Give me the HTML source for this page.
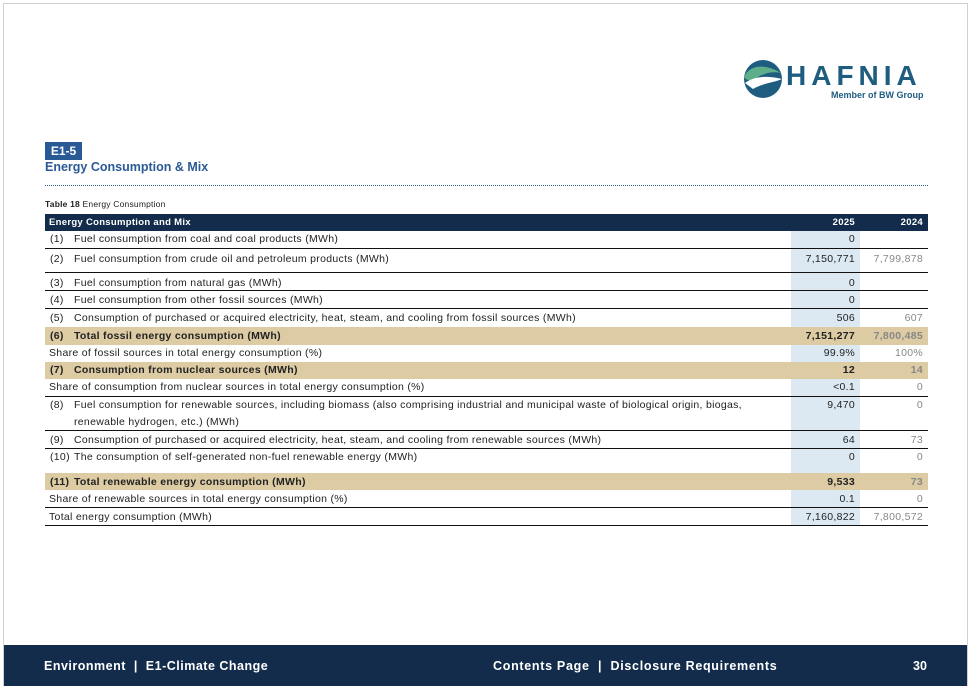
<!DOCTYPE html>
<html><head><meta charset="utf-8"><style>
*{margin:0;padding:0;box-sizing:border-box}
body{width:971px;height:688px;background:#fff;position:relative;overflow:hidden;font-family:"Liberation Sans",sans-serif;color:#222}
.frame{position:absolute;left:3px;top:3px;width:965px;height:683px;border:1px solid #d0d0d0}
.tag{position:absolute;left:45px;top:142px;width:37px;height:18px;background:#2a5a95;color:#fff;font-weight:bold;font-size:12px;line-height:18px;text-align:center}
.title{position:absolute;left:45px;top:160px;font-size:12.5px;font-weight:bold;color:#2a5a95}
.dots{position:absolute;left:45px;top:185px;width:883px;border-top:1px dotted #2a5a95}
.cap{position:absolute;left:45px;top:199px;font-size:8.5px;letter-spacing:0.2px}
.r{position:absolute;left:45px;width:883px;font-size:10.5px;letter-spacing:0.3px}
.r span{position:absolute}
.n{left:5px}.l{left:29px}.s{left:4px}
.a{left:746px;width:69px;height:100%;background:#dce9f3;text-align:right;padding-right:5px}
.b{left:815px;width:68px;text-align:right;padding-right:5px;color:#888}
.t{background:#dccba3;font-weight:bold}.t .a{background:transparent}
.bl{border-bottom:1px solid #111}
.h{background:#132c4c;color:#fff;font-weight:bold;font-size:9.5px}
.h .a{background:transparent}.h .b{color:#fff}
.foot{position:absolute;left:4px;top:645px;width:963px;height:41px;background:#132c4c;color:#fff;font-weight:bold;font-size:12.5px;line-height:43px}
.foot span{position:absolute}
</style></head><body>
<div class="frame"></div>
<svg style="position:absolute;left:743px;top:59px" width="40" height="40" viewBox="0 0 40 40">
<circle cx="20" cy="20" r="19" fill="#1f5d80"/>
<path d="M1 18 C6 6 22 4 38 14 C30 12 20 14 12 20 C8 22 4 22 1 18Z" fill="#5fae8b"/>
<path d="M2 24 C10 18 22 16 39 20 C30 24 20 24 10 30Z" fill="#fff"/>
</svg>
<div style="position:absolute;left:786px;top:62px;font-size:28px;font-weight:bold;color:#1f5d80;letter-spacing:5px;line-height:28px">HAFNIA</div>
<div style="position:absolute;left:831px;top:90px;font-size:9px;font-weight:bold;color:#1f5d80">Member of BW Group</div>
<div class="tag">E1-5</div>
<div class="title">Energy Consumption &amp; Mix</div>
<div class="dots"></div>
<div class="cap"><b>Table 18</b> Energy Consumption</div>
<div class="r h" style="top:214px;height:17px;line-height:17px"><span class="s">Energy Consumption and Mix</span><span class="a">2025</span><span class="b">2024</span></div>
<div class="r bl" style="top:231px;height:18px;line-height:17px"><span class="n">(1)</span><span class="l">Fuel consumption from coal and coal products (MWh)</span><span class="a">0</span><span class="b"></span></div>
<div class="r bl" style="top:249px;height:24px;line-height:20px"><span class="n">(2)</span><span class="l">Fuel consumption from crude oil and petroleum products (MWh)</span><span class="a">7,150,771</span><span class="b">7,799,878</span></div>
<div class="r bl" style="top:273px;height:18px;line-height:20px"><span class="n">(3)</span><span class="l">Fuel consumption from natural gas (MWh)</span><span class="a">0</span><span class="b"></span></div>
<div class="r bl" style="top:291px;height:18px;line-height:18px"><span class="n">(4)</span><span class="l">Fuel consumption from other fossil sources (MWh)</span><span class="a">0</span><span class="b"></span></div>
<div class="r" style="top:309px;height:18px;line-height:18px"><span class="n">(5)</span><span class="l">Consumption of purchased or acquired electricity, heat, steam, and cooling from fossil sources (MWh)</span><span class="a">506</span><span class="b">607</span></div>
<div class="r t" style="top:327px;height:18px;line-height:18px"><span class="n">(6)</span><span class="l">Total fossil energy consumption (MWh)</span><span class="a">7,151,277</span><span class="b">7,800,485</span></div>
<div class="r" style="top:345px;height:17px;line-height:17px"><span class="s">Share of fossil sources in total energy consumption (%)</span><span class="a">99.9%</span><span class="b">100%</span></div>
<div class="r t" style="top:362px;height:17px;line-height:17px"><span class="n">(7)</span><span class="l">Consumption from nuclear sources (MWh)</span><span class="a">12</span><span class="b">14</span></div>
<div class="r bl" style="top:379px;height:18px;line-height:17px"><span class="s">Share of consumption from nuclear sources in total energy consumption (%)</span><span class="a">&lt;0.1</span><span class="b">0</span></div>
<div class="r bl" style="top:397px;height:34px;line-height:17px"><span class="n">(8)</span><span class="l">Fuel consumption for renewable sources, including biomass (also comprising industrial and municipal waste of biological origin, biogas,<br>renewable hydrogen, etc.) (MWh)</span><span class="a">9,470</span><span class="b">0</span></div>
<div class="r bl" style="top:431px;height:18px;line-height:18px"><span class="n">(9)</span><span class="l">Consumption of purchased or acquired electricity, heat, steam, and cooling from renewable sources (MWh)</span><span class="a">64</span><span class="b">73</span></div>
<div class="r" style="top:449px;height:24px;line-height:17px"><span class="n">(10)</span><span class="l">The consumption of self-generated non-fuel renewable energy (MWh)</span><span class="a">0</span><span class="b">0</span></div>
<div class="r t" style="top:473px;height:17px;line-height:19px"><span class="n">(11)</span><span class="l">Total renewable energy consumption (MWh)</span><span class="a">9,533</span><span class="b">73</span></div>
<div class="r bl" style="top:490px;height:18px;line-height:18px"><span class="s">Share of renewable sources in total energy consumption (%)</span><span class="a">0.1</span><span class="b">0</span></div>
<div class="r bl" style="top:508px;height:18px;line-height:18px"><span class="s">Total energy consumption (MWh)</span><span class="a">7,160,822</span><span class="b">7,800,572</span></div>
<div class="foot"><span style="left:40px;letter-spacing:0.5px">Environment&nbsp; | &nbsp;E1-Climate Change</span><span style="left:489px;letter-spacing:0.7px">Contents Page &nbsp;| &nbsp;Disclosure Requirements</span><span style="left:909px">30</span></div>
</body></html>
